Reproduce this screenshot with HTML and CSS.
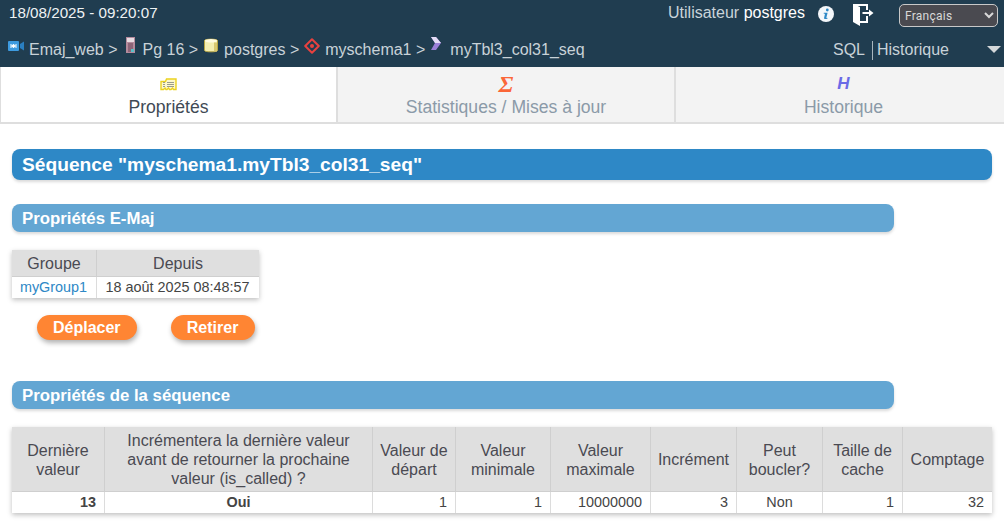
FILE: index.html
```html
<!DOCTYPE html>
<html lang="fr">
<head>
<meta charset="utf-8">
<title>Emaj_web</title>
<link rel="stylesheet" href="styles.css">
</head>
<body>
<header class="topbar">
  <div class="toprow">
    <span class="clock">18/08/2025 - 09:20:07</span>
    <div class="userbox">
      <span class="user">Utilisateur <b>postgres</b></span>
      <svg class="ico-info" width="16" height="16" viewBox="0 0 16 16"><circle cx="8" cy="8" r="8" fill="#f4f7fa"/><circle cx="9.300" cy="4" r="1.400" fill="#2e88c6"/><path d="M5.800 6.800h3.800l-1.200 4.800c-.1.500.4.500 1.300.1l-.2.900c-1.700.8-3.800.8-3.400-.9l.9-3.900H5.700z" fill="#2e88c6"/></svg>
      <svg class="ico-exit" width="21" height="22" viewBox="0 0 21 22"><path d="M0 0l7 3v19l-7-4z" fill="#fff"/><path d="M0 0h15v6h-2V2H0zM7 17h6v-5h2v7H7z" fill="#fff"/><path d="M9.500 8H16V5.500L20.500 9 16 12.500V10H9.500z" fill="#fff"/></svg>
      <select class="lang"><option>Français</option></select>
    </div>
  </div>
  <div class="navrow">
    <nav class="crumbs">
      <svg class="ico i1" width="16" height="12" viewBox="0 0 16 12"><rect x="0" y="1" width="11" height="10" rx="1" fill="#3d9be0"/><path d="M12 4l4-2.500v9L12 8z" fill="#2a7fc0"/><path d="M3 4v4M8 4v4M3.500 6l2-1.500v3zM7.500 6l-2-1.500v3z" stroke="#fff" fill="#fff" stroke-width="1"/></svg>
      <span class="crumb">Emaj_web &gt;</span>
      <svg class="ico i2" width="11" height="16" viewBox="0 0 11 16"><rect x="1" y="0" width="9" height="16" fill="#b48a9c"/><rect x="2" y="1" width="7" height="4" fill="#e8dce2"/><rect x="3" y="6" width="5" height="9" fill="#8d6478"/><rect x="6" y="12" width="3" height="3" fill="#59c0c8"/></svg>
      <span class="crumb">Pg 16 &gt;</span>
      <svg class="ico i3" width="14" height="15" viewBox="0 0 14 15"><path d="M.5 2.500C.5 .7 13.500 .7 13.500 2.500v10c0 1.800-13 1.800-13 0z" fill="#f4eeb0" stroke="#b7a544"/><ellipse cx="7" cy="2.700" rx="6" ry="1.700" fill="#fffbe0"/><rect x="10" y="4.500" width="3" height="9" fill="#d8c870"/></svg>
      <span class="crumb">postgres &gt;</span>
      <svg class="ico i4" width="16" height="16" viewBox="0 0 16 16"><path d="M8 1.200L14.800 8 8 14.800 1.200 8z" fill="none" stroke="#e8413f" stroke-width="2" stroke-linejoin="round"/><circle cx="8" cy="8" r="2" fill="#e8413f"/></svg>
      <span class="crumb">myschema1 &gt;</span>
      <svg class="ico i5" width="12" height="14" viewBox="0 0 12 14"><path d="M1 0h5l5 6-5 7H1l4-7z" fill="#9a7fd8"/><path d="M1 0h5l5 6H5z" fill="#e4dcf6"/></svg>
      <span class="crumb current">myTbl3_col31_seq</span>
    </nav>
    <div class="bottomlinks">
      <span class="sql">SQL</span>
      <span class="hist">Historique</span>
      <span class="caret"></span>
    </div>
  </div>
</header>

<div class="tabs">
  <div class="tab active">
    <svg class="tabicon" width="17" height="14" viewBox="0 0 17 14"><path d="M1 4.500h4.500l1-2.500h9.500v10.500h-2.500l-1-1.500-1.500 1.500h-1.500l-1-1.500-1.500 1.500H6l-1-1.500-1.500 1.500H1z" fill="#fdf8cc" stroke="#ecd21f" stroke-width="1.400"/><path d="M7 5.500h7M7 7.500h7M7 9.500h7M3 5.500h2M3 7.500h2M3 9.500h2" stroke="#9c9c8c"/></svg>
    <span>Propriétés</span>
  </div>
  <div class="tab">
    <span class="tabglyph sigma">Σ</span>
    <span>Statistiques / Mises à jour</span>
  </div>
  <div class="tab last">
    <span class="tabglyph histo">H</span>
    <span>Historique</span>
  </div>
</div>

<main class="content">
  <h1 class="title">Séquence "myschema1.myTbl3_col31_seq"</h1>

  <h2 class="subtitle">Propriétés E-Maj</h2>
  <table class="data small">
    <colgroup><col class="g1"><col class="g2"></colgroup>
    <tr><th>Groupe</th><th>Depuis</th></tr>
    <tr><td class="center"><a class="link">myGroup1</a></td><td class="center">18 août 2025 08:48:57</td></tr>
  </table>
  <div class="actions">
    <button class="btn move">Déplacer</button>
    <button class="btn remove">Retirer</button>
  </div>

  <h2 class="subtitle second">Propriétés de la séquence</h2>
  <table class="data wide">
    <colgroup>
      <col class="c1"><col class="c2"><col class="c3"><col class="c4"><col class="c5"><col class="c6"><col class="c7"><col class="c8"><col class="c9">
    </colgroup>
    <tr>
      <th>Dernière valeur</th>
      <th>Incrémentera la dernière valeur avant de retourner la prochaine valeur (is_called) ?</th>
      <th>Valeur de départ</th>
      <th>Valeur minimale</th>
      <th>Valeur maximale</th>
      <th>Incrément</th>
      <th>Peut boucler?</th>
      <th>Taille de cache</th>
      <th>Comptage</th>
    </tr>
    <tr>
      <td class="num strong">13</td>
      <td class="center strong">Oui</td>
      <td class="num">1</td>
      <td class="num">1</td>
      <td class="num">10000000</td>
      <td class="num">3</td>
      <td class="center">Non</td>
      <td class="num">1</td>
      <td class="num">32</td>
    </tr>
  </table>
</main>
</body>
</html>
```

FILE: styles.css
```css
* { box-sizing: border-box; }
html, body { margin: 0; padding: 0; }
body {
  width: 1004px;
  height: 528px;
  overflow: hidden;
  background: #fff;
  color: #444;
  font-family: "Liberation Sans", Arial, sans-serif;
  font-size: 16px;
}

.topbar { background: #203d50; height: 67px; color: #d5dde2; }
.toprow {
  display: flex;
  justify-content: space-between;
  height: 34px;
  padding: 3px 6px 0 9px;
}
.clock { font-size: 15.200px; line-height: 20px; color: #eef2f4; }
.userbox { display: flex; align-items: flex-start; }
.user { font-size: 16px; line-height: 20px; color: #c9d4da; }
.user b { font-weight: 400; color: #fff; }
.ico-info { margin: 3px 0 0 13px; }
.ico-exit { margin: 1px 0 0 19px; }
.lang {
  margin: 1px 0 0 25px;
  width: 99px;
  height: 23px;
  padding: 0 0 0 1px;
  font-family: Roboto, sans-serif;
  font-size: 12px;
  letter-spacing: .25px;
  color: #d8d8d8;
  background: #4a4a50;
  border: 1px solid #c8c8c8;
  border-radius: 5px;
}

.navrow {
  display: flex;
  justify-content: space-between;
  padding: 0 3px 0 8px;
  height: 33px;
}
.crumbs { display: flex; align-items: flex-start; height: 33px; }
.crumb { font-size: 16px; line-height: 32px; white-space: nowrap; color: #c8d2d8; }
.ico { flex: none; }
.i1 { margin: 6px 5px 0 0; }
.i2 { margin: 3px 7px 0 7px; }
.i3 { margin: 4px 6px 0 6px; }
.i4 { margin: 4px 5px 0 5px; }
.i5 { margin: 3px 8px 0 5px; }
.bottomlinks { display: flex; align-items: flex-start; }
.sql, .hist { font-size: 16px; line-height: 32px; color: #c8d2d8; }
.hist {
  position: relative;
  margin-left: 7px;
  padding-left: 5px;
  margin-right: 38px;
}
.hist::before {
  content: "";
  position: absolute;
  left: 0;
  top: 7px;
  height: 19px;
  border-left: 1px solid #a8b6be;
}
.caret {
  width: 0;
  height: 0;
  margin-top: 12px;
  border-left: 7px solid transparent;
  border-right: 7px solid transparent;
  border-top: 7px solid #d4d8da;
}

.tabs { display: flex; height: 57px; border-bottom: 2px solid #dedede; }
.tab {
  flex: none;
  width: 338px;
  height: 55px;
  background: #f3f3f3;
  border-right: 2px solid #dedede;
  color: #8b9aa8;
  font-size: 17.600px;
  line-height: 22px;
  display: flex;
  flex-direction: column;
  align-items: center;
  padding-top: 9px;
}
.tab.active { background: #fff; color: #3f4a55; border-left: 1px solid #dedede; }
.tab.last { flex: 1; width: auto; border-right: 0; padding-left: 7px; }
.tab span:last-child { margin-top: 4px; }
.tabicon { height: 14px; margin: 1px 0 1px; }
.tabglyph {
  display: block;
  height: 16px;
  font-family: "Liberation Serif", serif;
  font-style: italic;
  font-weight: 700;
  font-size: 24px;
  line-height: 16px;
}
.sigma { color: #fb6638; }
.histo { color: #6a6ae6; font-family: "Liberation Sans", sans-serif; font-size: 17px; }

.content { padding: 25px 12px 0; }
.title {
  margin: 0;
  height: 31px;
  padding-left: 10px;
  font-size: 19.200px;
  line-height: 31px;
  font-weight: 700;
  color: #fff;
  background: #2e88c6;
  border-radius: 8px;
  box-shadow: 0 2px 3px rgba(0,0,0,.15);
}
.subtitle {
  margin: 24px 98px 0 0;
  height: 28px;
  padding-left: 10px;
  font-size: 16.800px;
  line-height: 30px;
  font-weight: 700;
  color: #fff;
  background: #63a6d3;
  border-radius: 8px;
  box-shadow: 0 2px 3px rgba(0,0,0,.15);
}
.subtitle.second { margin-top: 41px; }

.data {
  border-collapse: separate;
  border-spacing: 0;
  table-layout: fixed;
  background: #fff;
  box-shadow: 0 2px 5px rgba(0,0,0,.25);
}
.data th {
  background: #dfdfdf;
  font-weight: 400;
  font-size: 16px;
  color: #4a4a52;
  line-height: 19px;
  padding: 1px 5px 0;
  border-left: 1px solid #cfcfcf;
  border-bottom: 1px solid #cfcfcf;
  text-align: center;
}
.data th:first-child, .data td:first-child { border-left: 0; }
.data td {
  font-size: 14.400px;
  line-height: 20px;
  padding: 0 8px;
  vertical-align: top;
  border-left: 1px solid #dcdcdc;
  color: #444;
  white-space: nowrap;
}
.small { margin-top: 18px; width: 247px; }
.small th { height: 27px; }
.small td { height: 21px; padding: 0 3px 0 2px; }
.g1 { width: 84px; }
.g2 { width: 163px; }
.link { color: #2e88c6; }
.center { text-align: center; }
.num { text-align: right; }
.strong { font-weight: 700; }

.actions { display: flex; margin: 17px 0 0 25px; }
.btn {
  height: 25px;
  padding: 0 16px;
  border: 0;
  border-radius: 13px;
  background: #ff8533;
  color: #fff;
  font-family: "Liberation Sans", sans-serif;
  font-size: 16px;
  font-weight: 700;
  box-shadow: 1px 3px 5px rgba(0,0,0,.3);
}
.move { margin-right: 34px; }
.remove { width: 84px; padding: 0; }

.wide { margin-top: 18px; width: 980px; }
.wide th { height: 65px; }
.wide td { height: 21px; }
.c1 { width: 92px; } .c2 { width: 268px; } .c3 { width: 83px; }
.c4 { width: 95px; } .c5 { width: 100px; } .c6 { width: 86px; }
.c7 { width: 86px; } .c8 { width: 80px; } .c9 { width: 90px; }
```
